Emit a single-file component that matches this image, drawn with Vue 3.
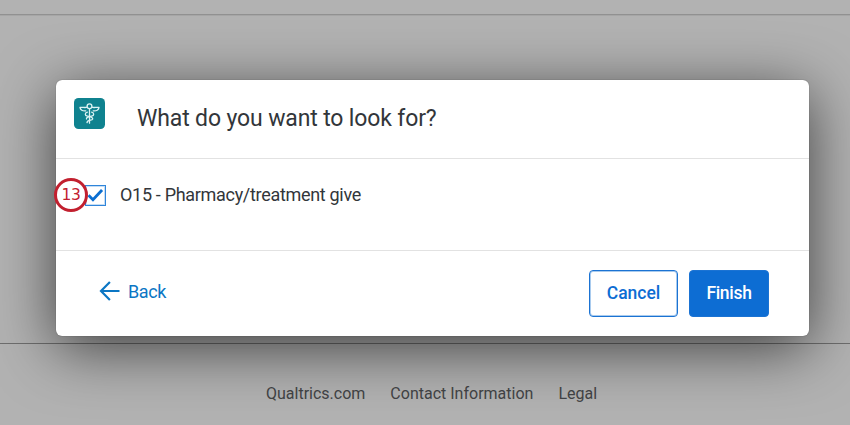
<script setup>
import { ref } from 'vue'

const links = ['Qualtrics.com', 'Contact Information', 'Legal']
const checked = ref(true)
</script>

<template>
  <div class="page">
    <div class="top-rule"></div>
    <main class="stage">
      <section class="modal">
        <header class="head">
          <svg class="app-icon" viewBox="0 0 31 31">
            <rect width="31" height="31" rx="4.5" fill="#0f828f" />
            <g fill="none" stroke="#dcf2f3" stroke-width="1.3" stroke-linecap="round" stroke-linejoin="round">
              <circle cx="15.5" cy="8.2" r="2.4" />
              <path d="M15.5 10.6V25.2" />
              <path d="M13.1 9.2C10.8 10.1 8.5 8.9 6 9.4C6.2 11.9 8.6 13.3 11.8 12.9" />
              <path d="M17.9 9.2C20.2 10.1 22.5 8.9 25 9.4C24.8 11.9 22.4 13.3 19.2 12.9" />
              <path d="M13.4 14.2C10.6 14.8 10.6 17.6 13.4 18.2C17 18.9 19.3 19.5 18.6 21.3C18 22.7 13.2 21.7 13 24.6" />
              <path d="M17.6 14.2C20.4 14.8 20.4 17.6 17.6 18.2C14 18.9 11.9 19.5 12.5 21" />
            </g>
          </svg>
          <h1 class="title">What do you want to look for?</h1>
        </header>
        <div class="body">
          <label class="option">
            <span class="box" @click="checked = !checked">
              <svg v-if="checked" viewBox="0 0 18 18">
                <path d="M2.4 8.8L6.6 13L15.2 3.8" fill="none" stroke="#0a6ed1" stroke-width="2.7" />
              </svg>
            </span>
            <span class="option-text">O15 - Pharmacy/treatment give</span>
          </label>
          <span class="badge">13</span>
        </div>
        <footer class="foot">
          <a class="back">
            <svg class="arrow" viewBox="0 0 21 20">
              <path d="M20.5 10H2.4M10.9 1L2 10L10.9 19" fill="none" stroke="#0b76c4" stroke-width="2.2" />
            </svg>
            <span class="back-text">Back</span>
          </a>
          <div class="actions">
            <button class="btn cancel">Cancel</button>
            <button class="btn finish">Finish</button>
          </div>
        </footer>
      </section>
    </main>
    <nav class="links">
      <a v-for="link in links" :key="link">{{ link }}</a>
    </nav>
  </div>
</template>

<style>
body {
  margin: 0;
  overflow: hidden;
}
</style>

<style scoped>
.page {
  width: 850px;
  height: 425px;
  overflow: hidden;
  background: #b2b2b2;
  font-family: Roboto, "Liberation Sans", sans-serif;
  color: #32363a;
  display: flex;
  flex-direction: column;
}
.top-rule {
  height: 14px;
  border-bottom: 1px solid #919191;
  box-shadow: 0 1px 0 #a6a6a6;
}
.stage {
  height: 263px;
  border-bottom: 1px solid #6e6e6e;
  padding: 65px 41px 0 56px;
}
.modal {
  position: relative;
  width: 753px;
  height: 256px;
  border-radius: 6px;
  background: #fff;
  box-shadow: 0 12px 60px rgba(0, 0, 0, 0.65), 0 0 1px rgba(0, 0, 0, 0.5);
}
.head {
  box-sizing: border-box;
  height: 79px;
  border-bottom: 1px solid #e2e2e2;
  padding: 18px 18px 0;
  display: flex;
  gap: 32px;
}
.app-icon {
  width: 31px;
  height: 31px;
}
.title {
  margin: 6px 0 0;
  font-size: 23px;
  line-height: 30px;
  font-weight: 400;
  letter-spacing: -0.14px;
  white-space: nowrap;
}
.body {
  position: relative;
  box-sizing: border-box;
  height: 92px;
  border-bottom: 1px solid #e2e2e2;
  padding: 25px 0 0 29px;
}
.option {
  display: flex;
  align-items: center;
  gap: 14px;
}
.box {
  box-sizing: border-box;
  width: 21px;
  height: 21px;
  border: 1px solid #2f85da;
  box-shadow: inset 0 0 0 1px #c4ddf5;
  display: flex;
}
.box svg {
  width: 100%;
  height: 100%;
}
.option-text {
  font-size: 18px;
  line-height: 22px;
  letter-spacing: -0.31px;
  white-space: nowrap;
}
.badge {
  position: absolute;
  left: -2px;
  top: 19px;
  box-sizing: border-box;
  width: 34px;
  height: 34px;
  border: 3px solid #c2202f;
  border-radius: 50%;
  background: #fff;
  color: #c2202f;
  font: 15.5px/28px "DejaVu Sans", sans-serif;
  letter-spacing: -0.3px;
  text-align: center;
}
.foot {
  display: flex;
  justify-content: space-between;
  padding: 19px 40px 0 43px;
}
.back {
  display: flex;
  align-items: center;
  gap: 8px;
  height: 42px;
  color: #0b76c4;
  font-size: 18px;
}
.back-text {
  letter-spacing: -0.4px;
}
.arrow {
  width: 21px;
  height: 20px;
}
.actions {
  display: flex;
  gap: 11px;
}
.btn {
  box-sizing: border-box;
  height: 47px;
  padding: 0 0 2px;
  border: 1px solid #1b73d3;
  border-radius: 4px;
  font: 500 17.5px/22px Roboto, sans-serif;
}
.cancel {
  width: 89px;
  color: #0d6dd3;
  background: #fff;
  box-shadow: inset 0 0 0 1px #a9cbee;
}
.finish {
  width: 80px;
  color: #fff;
  background: #0d6dd3;
  letter-spacing: -0.3px;
}
.links {
  display: flex;
  padding: 39px 0 0 266px;
  gap: 25px;
  font-size: 16px;
  line-height: 22px;
  color: #424446;
  white-space: nowrap;
}
</style>
